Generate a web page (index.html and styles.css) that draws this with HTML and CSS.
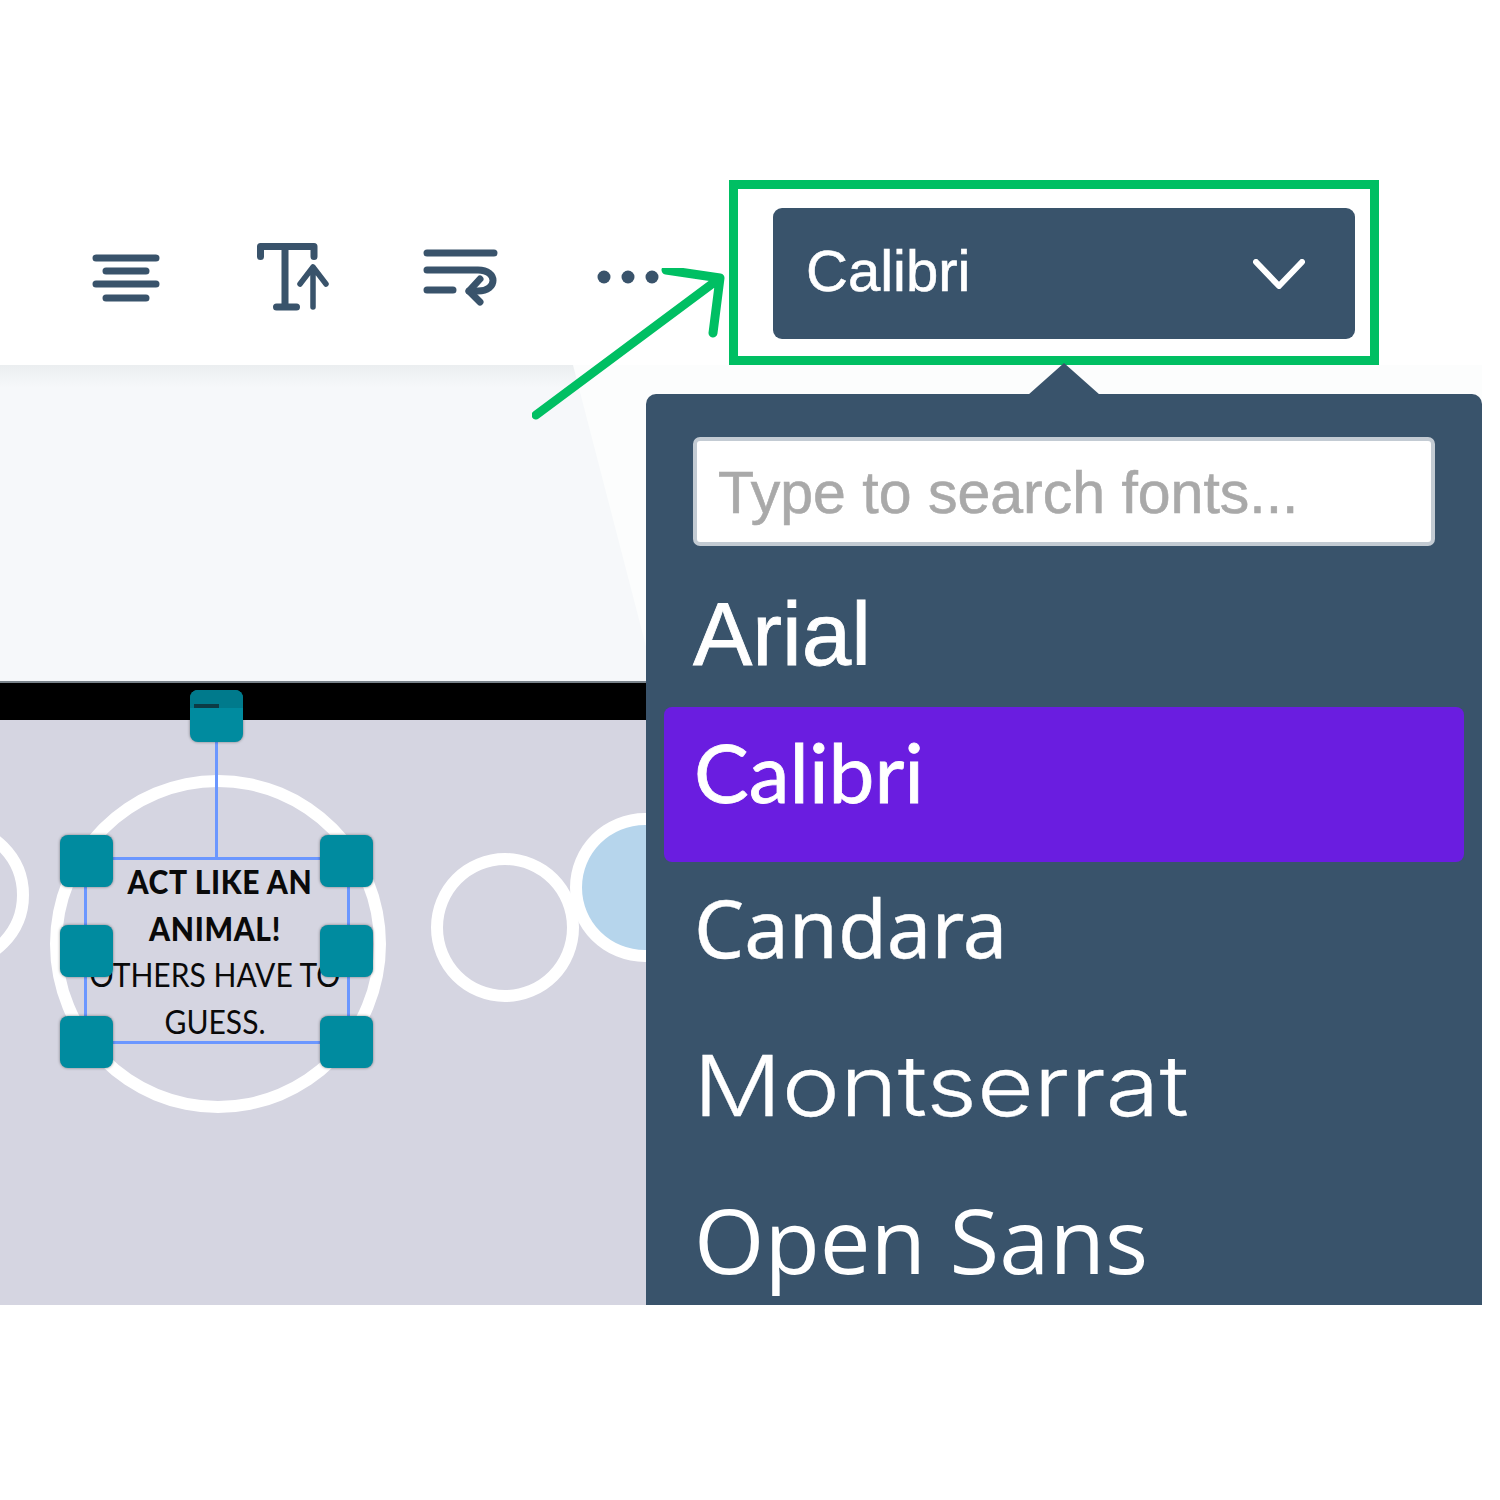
FILE: index.html
```html
<!DOCTYPE html>
<html lang="en">
<head>
<meta charset="utf-8">
<title>Font picker</title>
<link rel="stylesheet" href="styles.css">
</head>
<body>
<div class="page">
  <header class="toolbar">
    <div class="tools">
      <svg class="icon icon-align" viewBox="0 0 70 50"><path d="M4 4H64M14 17H54M4 30H64M14 44H54"/></svg>
      <svg class="icon icon-size" viewBox="0 0 76 70"><path d="M4.500 13.500V3.500H58V13.500M29 3.500V64M20.500 64H40.500"/><path class="thin" d="M57 64V24M44 41L57 24L70 41"/></svg>
      <svg class="icon icon-wrap" viewBox="0 0 76 60"><path d="M5 4H72M5 21H56C76 21 76 42 56 42H47M5 41H31"/><path d="M58 30L47 42L58 53"/></svg>
      <svg class="icon icon-more" viewBox="0 0 64 14"><circle cx="7" cy="7" r="6.5"/><circle cx="31" cy="7" r="6.5"/><circle cx="55" cy="7" r="6.5"/></svg>
    </div>
    <div class="highlight">
      <div class="select">
        <span class="select-label">Calibri</span>
        <svg class="chevron" viewBox="0 0 52 30"><path d="M3 3L26 27L49 3"/></svg>
      </div>
    </div>
  </header>

  <section class="stage">
    <div class="shelf"><div class="wedge"></div></div>
    <div class="bar"></div>
    <div class="slide">
      <div class="ring ring-left"></div>
      <div class="ring ring-main"></div>
      <div class="ring ring-next"></div>
      <div class="ring ring-blue"></div>

      <div class="card-text">
        <strong class="line-first">ACT LIKE AN</strong>
        <strong>ANIMAL!</strong>
        <span>OTHERS HAVE TO</span>
        <span>GUESS.</span>
      </div>
      <div class="selection"></div>
      <div class="stem"></div>
      <div class="handle handle-rotate"><i class="strip"></i><i class="dash"></i></div>
      <div class="handle h-tl"></div>
      <div class="handle h-tr"></div>
      <div class="handle h-ml"></div>
      <div class="handle h-mr"></div>
      <div class="handle h-bl"></div>
      <div class="handle h-br"></div>
    </div>

    <div class="popup">
      <div class="notch"></div>
      <div class="search">Type to search fonts...</div>
      <ul class="fonts">
        <li class="font f-arial">Arial</li>
        <li class="font f-calibri">Calibri</li>
        <li class="font f-candara">Candara</li>
        <li class="font f-mont">Montserrat</li>
        <li class="font f-open">Open Sans</li>
      </ul>
    </div>
  </section>

  <svg class="callout" viewBox="0 0 200 160"><path d="M4 147L188 10M134 2L188 10L181 65"/></svg>
</div>
</body>
</html>
```
FILE: styles.css
```css
* { box-sizing: border-box; }
html, body { margin: 0; background: #fff; }
.page { position: relative; width: 1500px; height: 1500px; font-family: "Liberation Sans", Arial, sans-serif; overflow: hidden; }

.toolbar { height: 365px; display: flex; align-items: flex-end; padding-left: 92px; background: #fff; }
.tools { display: flex; align-items: flex-start; height: 185px; width: 637px; position: relative; }
.icon { display: block; flex: none; fill: none; stroke: #39536b; stroke-width: 7; stroke-linecap: round; stroke-linejoin: round; }
.icon-align { width: 70px; height: 50px; margin-top: 74px; }
.icon-size { width: 76px; height: 70px; margin: 63px 0 0 94px; }
.icon-wrap { width: 76px; height: 60px; margin: 69px 0 0 90px; }
.icon-more { width: 64px; height: 14px; fill: #39536b; stroke: none; margin: 90px 0 0 99px; }
.thin { stroke-width: 5.5; }

.highlight { width: 650px; height: 185px; border: 9px solid #00bf63; padding: 19px 15px 17px 35px; }
.select { height: 131px; border-radius: 9px; background: #39536b; display: flex; align-items: center; justify-content: space-between; padding: 0 50px 0 33px; }
.select-label { color: #fff; font-size: 58px; margin-top: -6px; -webkit-text-stroke: .6px #fff; }
.chevron { width: 52px; height: 30px; fill: none; stroke: #fff; stroke-width: 6; stroke-linecap: round; stroke-linejoin: round; }

.stage { position: relative; height: 940px; width: 1482px; display: flex; flex-direction: column; }
.shelf { height: 316px; position: relative; background: linear-gradient(#ebeef0 0, #f6f8fa 22px); }
.wedge { position: absolute; inset: 0; background: #fcfdfd; clip-path: polygon(573px 0, 100% 0, 100% 100%, 655px 100%); }
.bar { height: 39px; background: #000; border-top: 2px solid #7a838b; }
.slide { position: relative; flex: 1; background: #d5d5e1; }

.ring { position: absolute; border-radius: 50%; border: 12px solid #fff; }
.ring-left { left: -119px; top: 101px; width: 148px; height: 148px; }
.ring-main { left: 50px; top: 55px; width: 336px; height: 338px; }
.ring-next { left: 431px; top: 133px; width: 148px; height: 149px; }
.ring-blue { left: 570px; top: 93px; width: 150px; height: 149px; background: #b6d5ec; }

.card-text { position: absolute; left: 65px; top: 138px; width: 300px; display: flex; flex-direction: column; align-items: center; font-family: Lato, sans-serif; font-size: 33px; line-height: 46.5px; color: #0a0a0a; transform: scaleX(.91); }
.card-text strong { font-weight: 900; letter-spacing: .7px; }
.card-text .line-first { margin-left: 11px; }
.selection { position: absolute; left: 84px; top: 137px; width: 266px; height: 187px; border: 3px solid #6b97ff; }
.stem { position: absolute; left: 215px; top: 20px; width: 3px; height: 120px; background: #6b97ff; }
.handle { position: absolute; width: 53px; height: 52px; border-radius: 8px; background: #008b9f; box-shadow: 0 0 3px rgba(0,0,0,.45); overflow: hidden; }
.handle-rotate { left: 190px; top: -30px; height: 52px; }
.strip { position: absolute; left: 0; right: 0; top: 0; height: 18px; background: #007a8c; }
.dash { position: absolute; left: 4px; top: 14px; width: 25px; height: 4px; background: #0c3b45; }
.h-tl { left: 60px; top: 115px; }
.h-tr { left: 320px; top: 115px; }
.h-ml { left: 60px; top: 205px; }
.h-mr { left: 320px; top: 205px; }
.h-bl { left: 60px; top: 296px; }
.h-br { left: 320px; top: 296px; }

.popup { position: absolute; left: 646px; top: 29px; width: 836px; height: 911px; background: #39536b; border-radius: 10px 10px 0 0; padding: 43px 18px 0; }
.notch { position: absolute; left: 382px; top: -31px; width: 72px; height: 32px; background: #39536b; clip-path: polygon(50% 0, 100% 100%, 0 100%); }
.search { margin: 0 29px; height: 109px; background: #fff; border: 4px solid #c3cbd3; border-radius: 7px; padding: 2px 0 0 21px; display: flex; align-items: center; color: #a9a9a9; font-size: 59px; -webkit-text-stroke: .6px #a9a9a9; }
.fonts { list-style: none; margin: 0; padding: 0; display: flex; flex-direction: column; color: #fff; }
.font { padding-left: 30px; white-space: nowrap; }
.f-arial { height: 161px; padding-left: 29px; font-size: 89px; line-height: 176px; -webkit-text-stroke: .8px #fff; }
.f-calibri { height: 155px; border-radius: 8px; background: #6a1de0; font-family: Lato, sans-serif; font-size: 82px; line-height: 129px; -webkit-text-stroke: .8px #fff; }
.f-candara { height: 157px; font-family: "Noto Sans", sans-serif; font-size: 79.500px; line-height: 130px; -webkit-text-stroke: .4px #fff; }
.f-mont { height: 157px; padding-left: 25px; font-family: Inter, sans-serif; font-weight: 300; font-size: 84px; line-height: 134px; transform: scaleX(1.17); transform-origin: left center; -webkit-text-stroke: .3px #fff; }
.f-open { height: 100px; padding-left: 30px; font-family: "Open Sans", sans-serif; font-size: 90.500px; line-height: 126px; }

.callout { position: absolute; left: 532px; top: 268px; width: 200px; height: 160px; fill: none; stroke: #00bf63; stroke-width: 9; stroke-linecap: round; stroke-linejoin: round; }
```
